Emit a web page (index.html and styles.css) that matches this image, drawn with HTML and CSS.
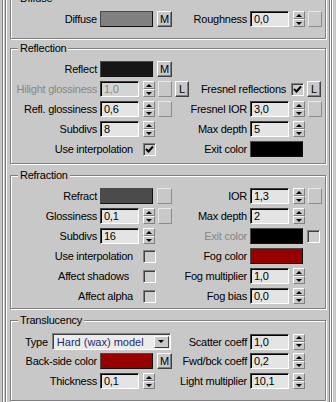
FILE: index.html
```html
<!DOCTYPE html>
<html lang="en">

<head>
    <meta charset="UTF-8">
    <meta name="viewport" content="width=device-width, initial-scale=1.0">
    <title>Basic parameters</title>
    <link rel="stylesheet" href="styles.css">
</head>

<body>
    <div class="frame">
        <div class="rollout">

            <fieldset class="group group--diffuse">
                <legend>Diffuse</legend>
                <div class="row">
                    <span class="lbl">Diffuse</span>
                    <div class="ctl"><span class="swatch swatch--diffuse"></span><span class="btn btn--m">M</span></div>
                    <span class="lbl">Roughness</span>
                    <div class="ctl"><span class="num">0,0</span><span class="spin"><i class="spin__up"></i><i class="spin__down"></i></span><span class="btn btn--map"></span></div>
                </div>
            </fieldset>

            <fieldset class="group group--reflection">
                <legend>Reflection</legend>
                <div class="row">
                    <span class="lbl">Reflect</span>
                    <div class="ctl"><span class="swatch swatch--reflect"></span><span class="btn btn--m">M</span></div>
                </div>
                <div class="row">
                    <span class="lbl lbl--off">Hilight glossiness</span>
                    <div class="ctl"><span class="num num--off">1,0</span><span class="spin"><i class="spin__up"></i><i class="spin__down"></i></span><span class="btn btn--map"></span><span class="btn btn--l">L</span></div>
                    <div class="fresnel">
                        <span>Fresnel reflections</span>
                        <span class="box box--on"><svg width="11" height="11" viewBox="0 0 11 11"><path d="M2 5l2.5 2.5L9 2.5" fill="none" stroke="#000" stroke-width="2"/></svg></span>
                        <span class="btn btn--l">L</span>
                    </div>
                </div>
                <div class="row">
                    <span class="lbl">Refl. glossiness</span>
                    <div class="ctl"><span class="num">0,6</span><span class="spin"><i class="spin__up"></i><i class="spin__down"></i></span><span class="btn btn--map"></span></div>
                    <span class="lbl">Fresnel IOR</span>
                    <div class="ctl"><span class="num">3,0</span><span class="spin"><i class="spin__up"></i><i class="spin__down"></i></span><span class="btn btn--map"></span></div>
                </div>
                <div class="row">
                    <span class="lbl">Subdivs</span>
                    <div class="ctl"><span class="num">8</span><span class="spin"><i class="spin__up"></i><i class="spin__down"></i></span></div>
                    <span class="lbl">Max depth</span>
                    <div class="ctl"><span class="num">5</span><span class="spin"><i class="spin__up"></i><i class="spin__down"></i></span></div>
                </div>
                <div class="row">
                    <label class="check">
                        <span class="check__text">Use interpolation</span>
                        <span class="box box--on"><svg width="11" height="11" viewBox="0 0 11 11"><path d="M2 5l2.5 2.5L9 2.5" fill="none" stroke="#000" stroke-width="2"/></svg></span>
                    </label>
                    <span class="lbl">Exit color</span>
                    <div class="ctl"><span class="swatch swatch--black"></span></div>
                </div>
            </fieldset>

            <fieldset class="group group--refraction">
                <legend>Refraction</legend>
                <div class="row">
                    <span class="lbl">Refract</span>
                    <div class="ctl"><span class="swatch swatch--refract"></span><span class="btn btn--map btn--wide"></span></div>
                    <span class="lbl">IOR</span>
                    <div class="ctl"><span class="num">1,3</span><span class="spin"><i class="spin__up"></i><i class="spin__down"></i></span><span class="btn btn--map"></span></div>
                </div>
                <div class="row">
                    <span class="lbl">Glossiness</span>
                    <div class="ctl"><span class="num">0,1</span><span class="spin"><i class="spin__up"></i><i class="spin__down"></i></span><span class="btn btn--map"></span></div>
                    <span class="lbl">Max depth</span>
                    <div class="ctl"><span class="num">2</span><span class="spin"><i class="spin__up"></i><i class="spin__down"></i></span></div>
                </div>
                <div class="row">
                    <span class="lbl">Subdivs</span>
                    <div class="ctl"><span class="num">16</span><span class="spin"><i class="spin__up"></i><i class="spin__down"></i></span></div>
                    <span class="lbl lbl--off">Exit color</span>
                    <div class="ctl"><span class="swatch swatch--black"></span><span class="box"></span></div>
                </div>
                <div class="row">
                    <label class="check">
                        <span class="check__text">Use interpolation</span>
                        <span class="box"></span>
                    </label>
                    <span class="lbl">Fog color</span>
                    <div class="ctl"><span class="swatch swatch--red"></span></div>
                </div>
                <div class="row">
                    <label class="check">
                        <span class="check__text check__text--shadows">Affect shadows</span>
                        <span class="box"></span>
                    </label>
                    <span class="lbl">Fog multiplier</span>
                    <div class="ctl"><span class="num">1,0</span><span class="spin"><i class="spin__up"></i><i class="spin__down"></i></span></div>
                </div>
                <div class="row">
                    <label class="check">
                        <span class="check__text">Affect alpha</span>
                        <span class="box"></span>
                    </label>
                    <span class="lbl">Fog bias</span>
                    <div class="ctl"><span class="num">0,0</span><span class="spin"><i class="spin__up"></i><i class="spin__down"></i></span></div>
                </div>
            </fieldset>

            <fieldset class="group group--translucency">
                <legend>Translucency</legend>
                <div class="row">
                    <div class="type">
                        <span>Type</span>
                        <div class="select">
                            <span class="select__text">Hard (wax) model</span>
                            <span class="select__btn"></span>
                        </div>
                    </div>
                    <span class="lbl">Scatter coeff</span>
                    <div class="ctl"><span class="num">1,0</span><span class="spin"><i class="spin__up"></i><i class="spin__down"></i></span></div>
                </div>
                <div class="row">
                    <span class="lbl">Back-side color</span>
                    <div class="ctl"><span class="swatch swatch--red"></span><span class="btn btn--m">M</span></div>
                    <span class="lbl">Fwd/bck coeff</span>
                    <div class="ctl"><span class="num">0,2</span><span class="spin"><i class="spin__up"></i><i class="spin__down"></i></span></div>
                </div>
                <div class="row">
                    <span class="lbl">Thickness</span>
                    <div class="ctl"><span class="num">0,1</span><span class="spin"><i class="spin__up"></i><i class="spin__down"></i></span></div>
                    <span class="lbl">Light multiplier</span>
                    <div class="ctl"><span class="num">10,1</span><span class="spin"><i class="spin__up"></i><i class="spin__down"></i></span></div>
                </div>
            </fieldset>

        </div>
    </div>
</body>

</html>
```

FILE: styles.css
```css
:root {
    --face: #c8c8c8;
    --dark: #808080;
    --darker: #404040;
    --light: #fff;
    --off: #878787;
}

* {
    box-sizing: border-box;
}

body {
    background: var(--face);
    color: #000;
    font-family: 'Liberation Sans', Arial, sans-serif;
    font-size: 11px;
    letter-spacing: -0.25px;
    line-height: 16px;
    margin: 0;
    overflow: hidden;
}

/* rollout frames, both etched */
.frame {
    border-left: 1px solid var(--dark);
    border-right: 1px solid var(--dark);
    box-shadow: inset 1px 0 0 var(--light), 1px 0 0 var(--light);
    margin: -8px 4px 0 2px;
    padding: 0 1px 0 2px;
}

.rollout {
    border-left: 1px solid var(--dark);
    border-right: 1px solid var(--dark);
    box-shadow: inset 1px 0 0 var(--light), 1px 0 0 var(--light);
    min-height: 430px;
    padding: 0 3px 0 4px;
}

/* group boxes */
.group {
    border: 1px solid var(--dark);
    box-shadow: inset 1px 1px 0 var(--light), 1px 1px 0 var(--light);
    margin: 0;
    min-width: 0;
    padding: 7px 0 6px;
}

.group + .group {
    margin-top: 5px;
}

.group--diffuse {
    margin-bottom: -2px;
    padding-bottom: 11px;
}

.group--refraction {
    padding-bottom: 4px;
}

.group--translucency {
    padding-bottom: 11px;
}

legend {
    background: var(--face);
    line-height: 12px;
    margin-left: 7px;
    padding: 0 2px;
}

/* rows: label | controls | label | controls */
.row {
    align-items: center;
    display: grid;
    grid-template-columns: 89px 80px 70px 1fr;
    height: 16px;
}

.row + .row {
    margin-top: 4px;
}

.lbl {
    padding-right: 3px;
    text-align: right;
    white-space: nowrap;
}

.lbl--off {
    color: var(--off);
}

.ctl {
    align-items: center;
    display: flex;
    height: 16px;
}

.num {
    background: #e4e4e4;
    border: 1px solid;
    border-color: var(--darker) var(--light) var(--light) var(--darker);
    box-shadow: inset 1px 1px 0 #000;
    flex: none;
    height: 16px;
    line-height: 15px;
    padding-left: 3px;
    width: 39px;
}

.num--off {
    background: #d4d4d4;
    color: var(--off);
}

.spin {
    display: flex;
    flex: none;
    flex-direction: column;
    height: 16px;
    margin-left: 4px;
    width: 12px;
}

.spin i {
    align-items: center;
    background: var(--face);
    border: 1px solid;
    border-color: var(--light) var(--dark) var(--dark) var(--light);
    display: flex;
    flex: 1;
    justify-content: center;
}

.spin i::after,
.select__btn::after {
    border-left: 3px solid transparent;
    border-right: 3px solid transparent;
    content: '';
}

.spin__up::after {
    border-bottom: 3px solid #000;
}

.spin__down::after,
.select__btn::after {
    border-top: 3px solid #000;
}

.swatch {
    border: 1px solid;
    border-color: #4a4a4a #111 #111 #4a4a4a;
    flex: none;
    height: 16px;
    width: 53px;
}

.swatch--diffuse {
    background: #808080;
}

.swatch--reflect {
    background: #161616;
}

.swatch--refract {
    background: #4b4b4b;
}

.swatch--black {
    background: #000;
}

.swatch--red {
    background: #960000;
}

.btn {
    align-items: center;
    background: var(--face);
    border: 1px solid;
    border-color: var(--light) var(--darker) var(--darker) var(--light);
    box-shadow: inset -1px -1px 0 var(--dark);
    display: flex;
    flex: none;
    height: 16px;
    justify-content: center;
    margin-left: 3px;
    width: 14px;
}

.btn--m {
    margin-left: 4px;
    width: 15px;
}

.btn--map {
    border-color: #e8e8e8 #8c8c8c #8c8c8c #e8e8e8;
    box-shadow: none;
}

.btn--wide {
    margin-left: 4px;
    width: 15px;
}

/* checkboxes */
.check {
    align-items: center;
    display: flex;
    grid-column: 1 / 3;
}

.check__text {
    text-align: right;
    white-space: nowrap;
    width: 122px;
}

.check__text--shadows {
    padding-right: 4px;
}

.box {
    background: #cdcdcd;
    border: 1px solid;
    border-color: var(--dark) var(--light) var(--light) var(--dark);
    box-shadow: inset 1px 1px 0 var(--darker);
    flex: none;
    height: 13px;
    margin-left: 10px;
    width: 13px;
}

.box svg {
    display: block;
}

.swatch + .box {
    margin-left: 4px;
}

.fresnel {
    align-items: center;
    display: flex;
    grid-column: 3 / 5;
    justify-content: flex-end;
    padding-right: 4px;
    white-space: nowrap;
}

.fresnel .box {
    margin-left: 5px;
}

/* dropdown */
.type {
    align-items: center;
    display: flex;
    grid-column: 1 / 3;
    padding-left: 14px;
}

.select {
    align-items: center;
    background: #ececec;
    border: 1px solid;
    border-color: var(--dark) var(--light) var(--light) var(--dark);
    box-shadow: inset 1px 1px 0 var(--darker);
    color: #1b2a6e;
    display: flex;
    font-family: 'Liberation Sans Narrow', 'Liberation Sans', sans-serif;
    height: 17px;
    letter-spacing: 0;
    margin-left: 4px;
    padding: 0 1px 0 4px;
    width: 119px;
}

.select__text {
    flex: 1;
    white-space: nowrap;
}

.select__btn {
    align-items: center;
    background: var(--face);
    border: 1px solid;
    border-color: var(--light) var(--darker) var(--darker) var(--light);
    display: flex;
    height: 12px;
    justify-content: center;
    width: 15px;
}
```
